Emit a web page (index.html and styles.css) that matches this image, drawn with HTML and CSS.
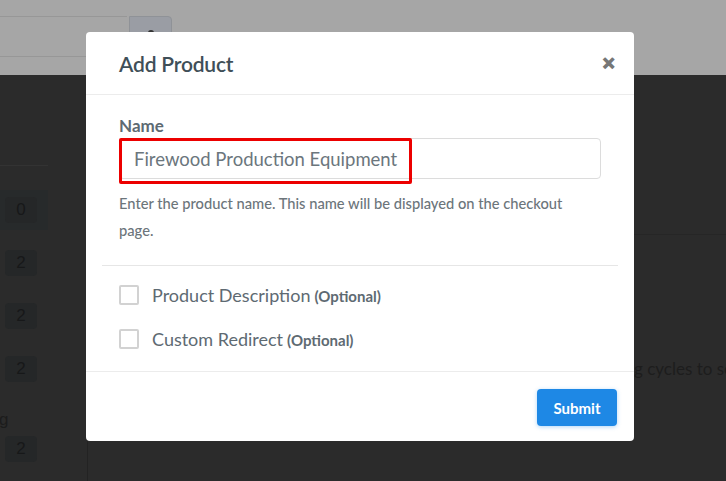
FILE: index.html
```html
<!DOCTYPE html>
<html>
<head>
<meta charset="utf-8">
<link rel="stylesheet" href="styles.css">
</head>
<body>
<div class="page">
  <header class="topbar">
    <div class="search"></div>
    <div class="search-btn"><span class="dot"></span></div>
  </header>
  <main class="main">
    <aside class="side">
      <div class="side-rule"></div>
      <div class="row active"><span class="badge">0</span></div>
      <div class="row"><span class="badge">2</span></div>
      <div class="row"><span class="badge">2</span></div>
      <div class="row"><span class="badge">2</span></div>
      <div class="row-label">g</div>
      <div class="row last"><span class="badge">2</span></div>
    </aside>
    <section class="content">
      <div class="right-rule"></div>
      <p class="bg-text">g cycles to se</p>
    </section>
  </main>

  <div class="modal">
    <div class="modal-header">
      <h2 class="modal-title">Add Product</h2>
      <span class="close">&#x2715;</span>
    </div>
    <div class="modal-body">
      <label class="label">Name</label>
      <div class="input">
        <span class="input-value">Firewood Production Equipment</span>
      </div>
      <p class="help">Enter the product name. This name will be displayed on the checkout page.</p>
      <div class="divider"></div>
      <div class="check-row"><span class="box"></span><span class="check-label">Product Description</span> <span class="opt">(Optional)</span></div>
      <div class="check-row"><span class="box"></span><span class="check-label">Custom Redirect</span> <span class="opt">(Optional)</span></div>
    </div>
    <div class="modal-footer">
      <button class="submit">Submit</button>
    </div>
  </div>
</div>
</body>
</html>
```
FILE: styles.css
```css
* { box-sizing: border-box; }
html, body { margin: 0; padding: 0; }
body {
  width: 726px;
  height: 481px;
  overflow: hidden;
  font-family: Lato, "Open Sans", sans-serif;
  background: #2b2b2b;
}
.page {
  position: relative;
  width: 726px;
  height: 481px;
  display: flex;
  flex-direction: column;
}
.topbar {
  flex: 0 0 75px;
  background: #a6a6a6;
  display: flex;
  align-items: flex-start;
  padding-top: 16px;
}
.search {
  flex: 0 0 131px;
  height: 41px;
  border-top: 1px solid #979797;
  border-bottom: 1px solid #979797;
  margin-left: -4px;
}
.search-btn {
  flex: 0 0 43px;
  height: 41px;
  margin-left: 2px;
  background: #9a9da4;
  border: 1px solid #8f9297;
  border-radius: 0 4px 4px 0;
  display: flex;
  justify-content: center;
  padding-top: 13px;
}
.dot { width: 6px; height: 4px; background: #333; border-radius: 3px 3px 0 0; }
.main {
  flex: 1;
  display: flex;
  background: #2b2b2b;
}
.side {
  flex: 0 0 88px;
  border-right: 1px solid #232323;
  display: flex;
  flex-direction: column;
  padding-top: 90px;
}
.side-rule { width: 48px; height: 1px; background: #333; margin-bottom: 24px; }
.row {
  width: 48px;
  height: 40px;
  display: flex;
  align-items: center;
  padding-left: 5px;
  margin-bottom: 13px;
  flex-shrink: 0;
}
.row.active { background: #272a2b; }
.row-label {
  font-family: "Liberation Sans", Arial, sans-serif;
  font-size: 17px;
  color: #1c1c1c;
  line-height: 20px;
  margin-top: 8px;
  margin-left: -1px;
}
.row.last { margin-top: -1px; }
.badge {
  width: 32px;
  height: 26px;
  border-radius: 4px;
  background: #252728;
  color: #171819;
  font-family: "Liberation Sans", Arial, sans-serif;
  font-size: 17px;
  display: flex;
  align-items: center;
  justify-content: center;
}
.content { flex: 1; position: relative; overflow: hidden; }
.right-rule { height: 1px; background: #262626; margin-top: 159px; }
.bg-text {
  margin: 123px 0 0 546px;
  font-size: 17px;
  color: #1d1d1d;
  white-space: nowrap;
}

.modal {
  position: absolute;
  left: 86px;
  top: 32px;
  width: 548px;
  height: 409px;
  background: #fff;
  border-radius: 4px;
  display: flex;
  flex-direction: column;
}
.modal-header {
  flex: 0 0 63px;
  border-bottom: 1px solid #ececec;
  display: flex;
  align-items: center;
  justify-content: space-between;
  padding: 0 19px 0 33px;
}
.modal-title {
  margin: 0;
  font-size: 21px;
  font-weight: 600;
  color: #3f4f58;
  letter-spacing: -0.2px;
}
.close {
  font-size: 16px;
  font-weight: 900;
  color: #777;
  -webkit-text-stroke: 1.2px #777;
}
.modal-body {
  padding: 20px 16px 0 16px;
  flex: 0 0 277px;
  border-bottom: 1px solid #ececec;
}
.label {
  display: block;
  margin-left: 17px;
  font-size: 17px;
  font-weight: 700;
  color: #5d6a72;
  line-height: 21px;
}
.input {
  margin: 2px 17px 0 17px;
  height: 41px;
  border: 1px solid #dcdcdc;
  border-radius: 4px;
  position: relative;
  display: flex;
  align-items: center;
  padding-left: 14px;
}
.input::before {
  content: "";
  position: absolute;
  left: -1px;
  top: -1px;
  width: 287px;
  height: 40px;
  border: 3px solid #ec0000;
  border-radius: 2px;
}
.input-value {
  font-size: 18.5px;
  color: #6b767d;
}
.help {
  margin: 11px 17px 0 17px;
  max-width: 452px;
  font-size: 14.7px;
  line-height: 27px;
  color: #6c757b;
  font-weight: 500;
}
.divider {
  height: 1px;
  background: #e6e6e6;
  margin: 21px 0 7px 0;
}
.check-row {
  display: flex;
  align-items: center;
  height: 44px;
  padding-left: 17px;
  color: #5e6a72;
}
.box {
  width: 20px;
  height: 20px;
  border: 2px solid #d2d2d2;
  border-radius: 2px;
  margin-right: 13px;
}
.check-label { font-size: 18px; }
.opt { font-size: 15px; font-weight: 700; margin-left: 4px; margin-top: 2px; }
.modal-footer {
  flex: 1;
  display: flex;
  justify-content: flex-end;
  align-items: flex-start;
  padding: 17px 17px 0 0;
}
.submit {
  width: 80px;
  height: 37px;
  background: #1e88e5;
  color: #fff;
  border: none;
  border-radius: 4px;
  font-family: Lato, sans-serif;
  font-size: 15px;
  font-weight: 700;
  box-shadow: 0 1px 4px rgba(30, 136, 229, 0.35);
}
```
